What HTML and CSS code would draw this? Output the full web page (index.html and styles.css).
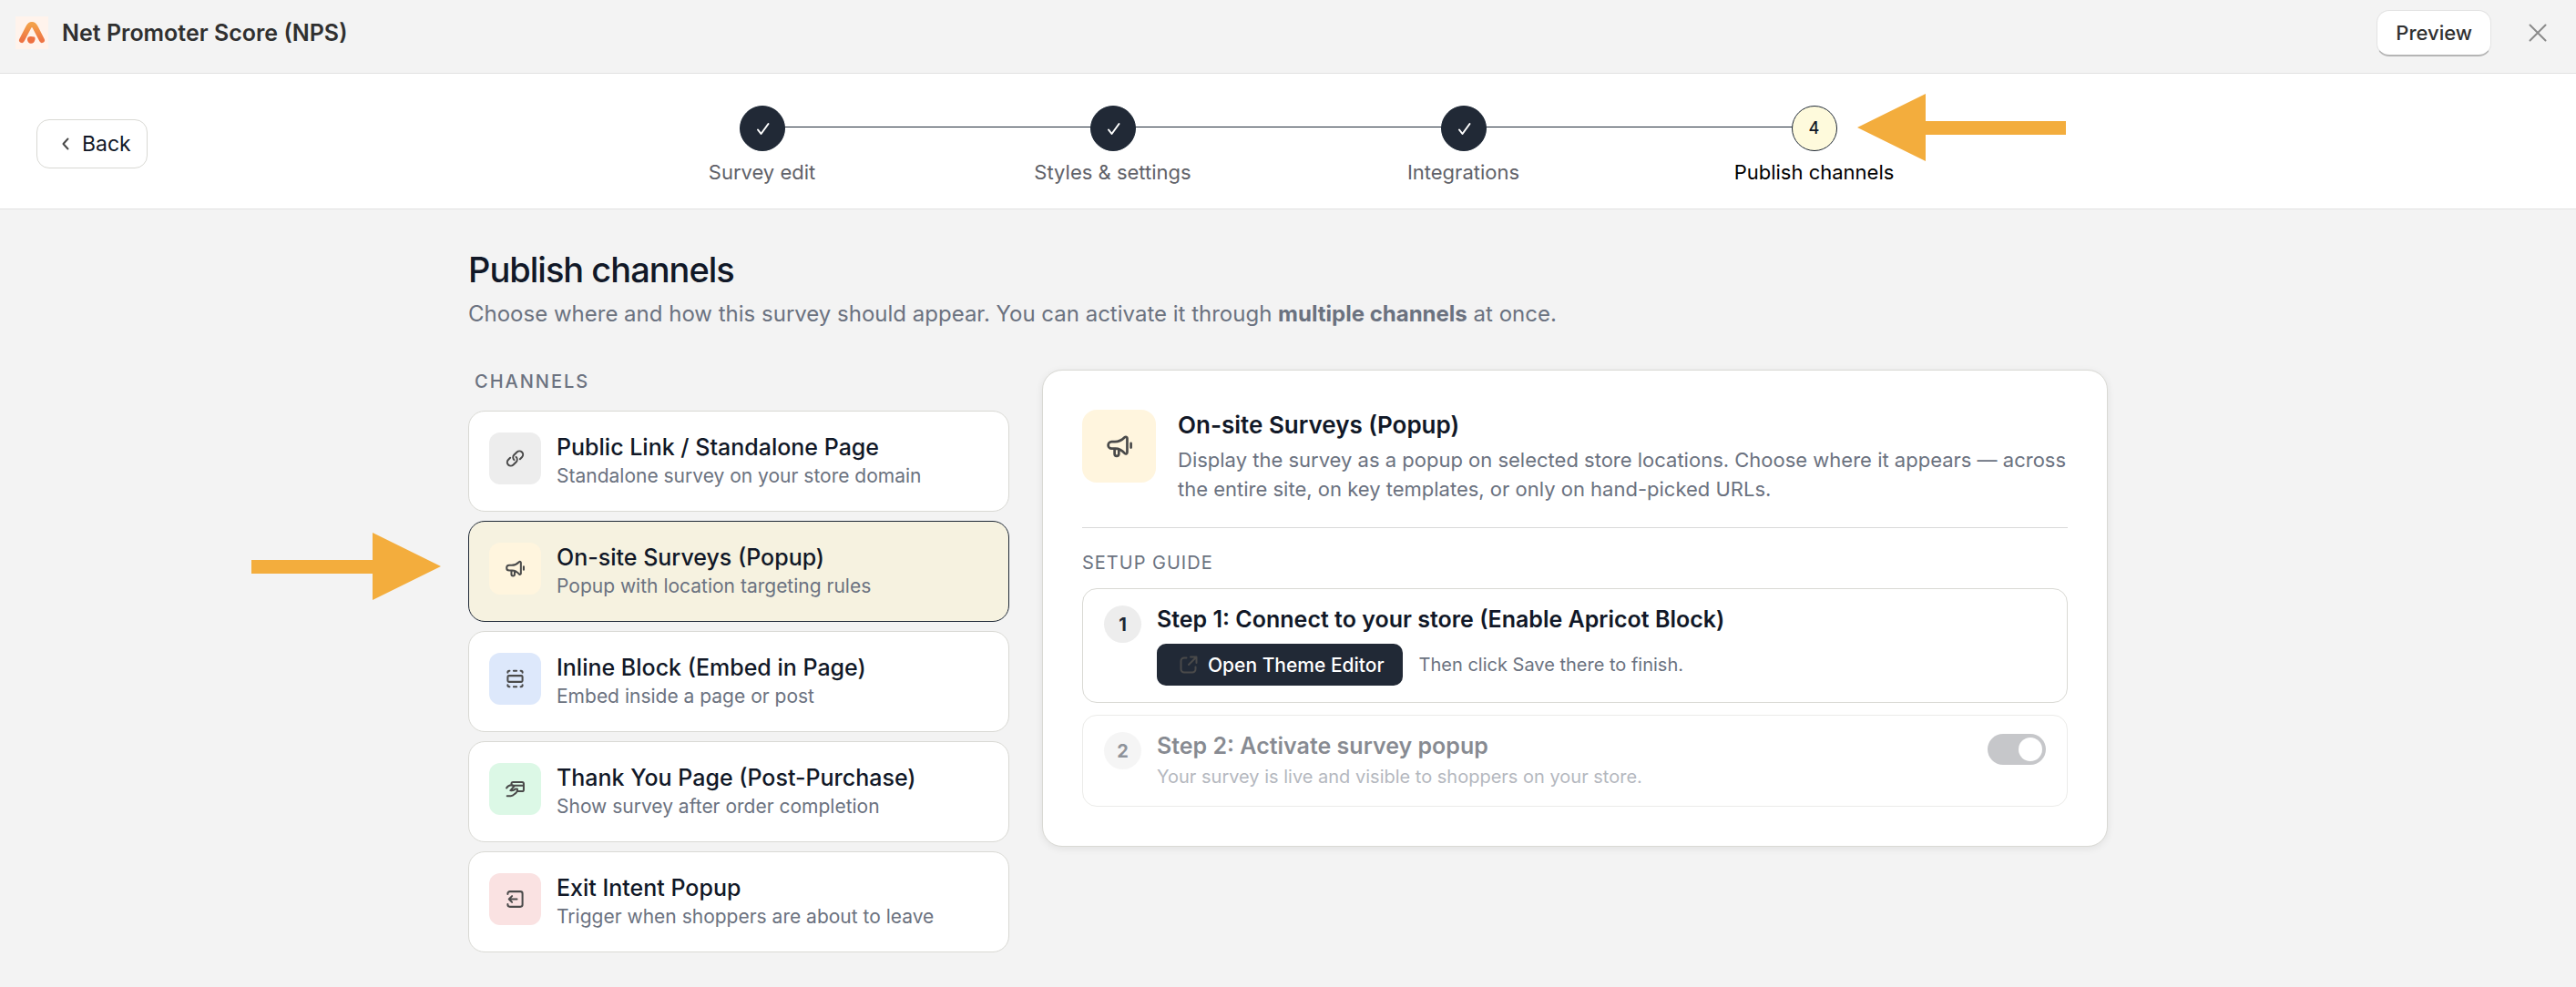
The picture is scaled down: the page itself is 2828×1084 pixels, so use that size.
FILE: index.html
```html
<!DOCTYPE html>
<html lang="en">
<head>
    <meta charset="UTF-8">
    <meta name="viewport" content="width=device-width, initial-scale=1.0">
    <title>Net Promoter Score (NPS)</title>
    <link rel="stylesheet" href="styles.css">
</head>
<body>
    <header class="topbar">
        <svg class="logo" viewBox="0 0 36 36" aria-hidden="true">
            <defs>
                <linearGradient id="logoFill" x1="0" y1="0" x2="0" y2="1">
                    <stop offset="0" stop-color="#f3a04a"/>
                    <stop offset="1" stop-color="#ee7444"/>
                </linearGradient>
            </defs>
            <rect width="36" height="36" fill="#fff3ec"/>
            <path d="M7 26 13.800 12.800C15 10.400 16 9 18 9s3 1.400 4.200 3.800L29 26" stroke="url(#logoFill)" stroke-width="6"/>
            <path d="M13 25.200c0-2.200 1.800-3.400 4-3.200l3.500.6c1 .3 1.300 1.400 1 2.800-.5 2.600-2.200 4.400-4.500 4.400s-4-2-4-4.600z" fill="#ee7040"/>
        </svg>
        <h1 class="topbar-title">Net Promoter Score (NPS)</h1>
        <button class="preview-btn" type="button">Preview</button>
        <button class="close-btn" type="button" aria-label="Close">
            <svg viewBox="0 0 20 20"><path d="M1.500 1.500l17 17M18.500 1.500l-17 17"/></svg>
        </button>
    </header>

    <nav class="wizard">
        <button class="back-btn" type="button">
            <svg viewBox="0 0 8 14"><path d="M6.500 1.500 1.500 7l5 5.500"/></svg>
            Back
        </button>
        <ol class="steps">
            <li class="step done">
                <span class="step-dot"><svg viewBox="0 0 16 16"><path d="M3 9.500l3.500 4.500L14.500 3"/></svg></span>
                <span class="step-label">Survey edit</span>
            </li>
            <li class="step done">
                <span class="step-dot"><svg viewBox="0 0 16 16"><path d="M3 9.500l3.500 4.500L14.500 3"/></svg></span>
                <span class="step-label">Styles &amp; settings</span>
            </li>
            <li class="step done">
                <span class="step-dot"><svg viewBox="0 0 16 16"><path d="M3 9.500l3.500 4.500L14.500 3"/></svg></span>
                <span class="step-label">Integrations</span>
            </li>
            <li class="step current">
                <span class="step-dot">4</span>
                <span class="step-label">Publish channels</span>
                <svg class="arrow arrow-left" viewBox="0 0 229 74" aria-hidden="true"><path d="M0 37 75 0v30h154v15H75v29z"/></svg>
            </li>
        </ol>
    </nav>

    <main class="page">
        <h2 class="page-title">Publish channels</h2>
        <p class="page-text">Choose where and how this survey should appear. You can activate it through <strong>multiple channels</strong> at once.</p>

        <div class="columns">
            <section class="channels">
                <h3 class="channels-label">CHANNELS</h3>

                <button class="channel" type="button">
                    <span class="channel-icon gray">
                        <svg class="icon" viewBox="0 0 20 20"><path d="M9.200 11.200a2.900 2.900 0 0 1 0-4.100l2.300-2.300a2.900 2.900 0 0 1 4.100 4.100l-1.600 1.600M10.800 8.800a2.900 2.900 0 0 1 0 4.100l-2.300 2.300a2.900 2.900 0 0 1-4.100-4.100L6 9.500"/></svg>
                    </span>
                    <span class="channel-text">
                        <span class="channel-name">Public Link / Standalone Page</span>
                        <span class="channel-desc">Standalone survey on your store domain</span>
                    </span>
                </button>

                <div class="channel-wrap">
                    <svg class="arrow arrow-right" viewBox="0 0 208 74" aria-hidden="true"><path d="M208 37 133 0v30H0v15h133v29z"/></svg>
                    <button class="channel selected" type="button">
                        <span class="channel-icon yellow">
                            <svg class="icon" viewBox="0 0 20 20"><path d="M5.200 7.300h2c2.500 0 4.500-1.200 6-2.700.6-.6 1.500-.2 1.500.6v8.600c0 .9-.9 1.200-1.500.6-1.500-1.700-3.200-2.900-5.600-2.900H5.200a2.100 2.100 0 0 1 0-4.200zM7 11.500v3.200a1.300 1.300 0 0 0 2.600 0v-2.900M17 8.300v2.600"/></svg>
                        </span>
                        <span class="channel-text">
                            <span class="channel-name">On-site Surveys (Popup)</span>
                            <span class="channel-desc">Popup with location targeting rules</span>
                        </span>
                    </button>
                </div>

                <button class="channel" type="button">
                    <span class="channel-icon blue">
                        <svg class="icon" viewBox="0 0 20 20"><rect x="4" y="7.500" width="12" height="5" rx="1"/><path d="M4 5v-.2c0-.7.500-1.300 1.200-1.300h.3M8.800 3.500h2.400M14.500 3.500h.3c.7 0 1.200.6 1.200 1.300V5M4 15v.2c0 .7.500 1.300 1.200 1.300h.3M8.800 16.500h2.400M14.500 16.500h.3c.7 0 1.200-.6 1.200-1.300V15"/></svg>
                    </span>
                    <span class="channel-text">
                        <span class="channel-name">Inline Block (Embed in Page)</span>
                        <span class="channel-desc">Embed inside a page or post</span>
                    </span>
                </button>

                <button class="channel" type="button">
                    <span class="channel-icon green">
                        <svg class="icon" viewBox="0 0 20 20"><path d="M7 6.500v-.7c0-.8.600-1.400 1.400-1.400h7.200c.8 0 1.400.6 1.400 1.400v4.700c0 .8-.6 1.400-1.400 1.400h-3.800M7.500 7.300H17M3 9.200c1-1.600 2.300-2.400 4-2.400h1M9.500 7.500 6.200 11.200c1.500.3 3-.1 4-1.200h1.600c.4 2-1 3.300-2.300 4.200-.9 1-1.800 1.600-3 1.600H3.500"/></svg>
                    </span>
                    <span class="channel-text">
                        <span class="channel-name">Thank You Page (Post-Purchase)</span>
                        <span class="channel-desc">Show survey after order completion</span>
                    </span>
                </button>

                <button class="channel" type="button">
                    <span class="channel-icon red">
                        <svg class="icon" viewBox="0 0 20 20"><path d="M4 6V5.500c0-1 .8-1.700 1.800-1.700h8.400c1 0 1.800.7 1.800 1.700v9c0 1-.8 1.700-1.800 1.700H5.800c-1 0-1.800-.7-1.800-1.700V14M11.500 10H5M7.500 7.500 5 10l2.500 2.500"/></svg>
                    </span>
                    <span class="channel-text">
                        <span class="channel-name">Exit Intent Popup</span>
                        <span class="channel-desc">Trigger when shoppers are about to leave</span>
                    </span>
                </button>
            </section>

            <section class="panel">
                <div class="panel-head">
                    <span class="panel-icon yellow">
                        <svg class="icon" viewBox="0 0 20 20"><path d="M5.200 7.300h2c2.500 0 4.500-1.200 6-2.700.6-.6 1.500-.2 1.500.6v8.600c0 .9-.9 1.200-1.500.6-1.500-1.700-3.200-2.900-5.600-2.900H5.200a2.100 2.100 0 0 1 0-4.200zM7 11.500v3.200a1.300 1.300 0 0 0 2.600 0v-2.900M17 8.300v2.600"/></svg>
                    </span>
                    <div>
                        <h3 class="panel-title">On-site Surveys (Popup)</h3>
                        <p class="panel-desc">Display the survey as a popup on selected store locations. Choose where it appears — across the entire site, on key templates, or only on hand-picked URLs.</p>
                    </div>
                </div>

                <h4 class="guide-label">SETUP GUIDE</h4>

                <div class="guide-step">
                    <span class="guide-num">1</span>
                    <div class="guide-body">
                        <h5 class="guide-title">Step 1: Connect to your store (Enable Apricot Block)</h5>
                        <div class="guide-action">
                            <button class="editor-btn" type="button">
                                <svg viewBox="0 0 20 20"><path d="M7.500 2.500H5A3.500 3.500 0 0 0 1.500 6v9A3.500 3.500 0 0 0 5 18.500h9a3.500 3.500 0 0 0 3.500-3.500v-2.500M12 1.500h6.500V8M18 2l-8 8"/></svg>
                                Open Theme Editor
                            </button>
                            <span class="guide-hint">Then click Save there to finish.</span>
                        </div>
                    </div>
                </div>

                <div class="guide-step disabled">
                    <span class="guide-num">2</span>
                    <div class="guide-body">
                        <label class="guide-title" for="activate">Step 2: Activate survey popup</label>
                        <p class="guide-text">Your survey is live and visible to shoppers on your store.</p>
                    </div>
                    <input class="toggle" id="activate" type="checkbox" role="switch" checked disabled>
                </div>
            </section>
        </div>
    </main>
</body>
</html>
```
FILE: styles.css
```css
* {
    box-sizing: border-box;
    margin: 0;
    padding: 0;
}

body {
    font-family: Inter, "Liberation Sans", sans-serif;
    font-size: 22px;
    line-height: 32px;
    color: #111827;
    background: #f3f3f3;
}

button {
    font-family: inherit;
    color: inherit;
    background: #fff;
    cursor: pointer;
}

svg {
    flex: none;
    fill: none;
    stroke-linecap: round;
    stroke-linejoin: round;
}

/* Top bar */
.topbar {
    display: flex;
    align-items: center;
    padding: 10px 32px 18px 17px;
    height: 81px;
    border-bottom: 1px solid #e1e1e1;
}

.logo {
    width: 36px;
    height: 36px;
    margin-right: 15px;
}

.topbar-title {
    font-size: 25px;
    font-weight: 600;
    color: #303030;
    margin-right: auto;
}

.preview-btn {
    height: 51px;
    padding: 0 20px;
    font-size: 22px;
    font-weight: 500;
    color: #303030;
    border: 1px solid #e3e3e3;
    border-bottom: 2px solid #b5b5b5;
    border-radius: 14px;
}

.close-btn {
    display: flex;
    margin-left: 41px;
    border: none;
    background: none;
}

.close-btn svg {
    width: 20px;
    height: 20px;
    stroke: #8a8a8a;
    stroke-width: 2;
}

/* Wizard steps */
.wizard {
    display: grid;
    grid-template-columns: minmax(160px, 1fr) minmax(0, 1540px) minmax(160px, 1fr);
    align-items: start;
    padding: 35px 0 26px;
    background: #fff;
    border-bottom: 1px solid #e1e1e1;
}

.back-btn {
    display: flex;
    align-items: center;
    justify-self: start;
    gap: 14px;
    height: 54px;
    margin: 15px 0 0 40px;
    padding: 0 17px 0 27px;
    font-size: 23px;
    font-weight: 400;
    border: 1px solid #d9d9d4;
    border-radius: 14px;
}

.back-btn svg {
    width: 8px;
    height: 14px;
    stroke: #4a4a4a;
    stroke-width: 2;
}

.steps {
    display: flex;
    list-style: none;
}

.step {
    position: relative;
    flex: 1;
    display: flex;
    flex-direction: column;
    align-items: center;
    gap: 9px;
}

/* line to the next step */
.step.done::after {
    content: "";
    position: absolute;
    top: 23px;
    left: 50%;
    width: 100%;
    height: 1px;
    background: #1f2937;
}

.step-dot {
    position: relative;
    z-index: 1;
    display: flex;
    align-items: center;
    justify-content: center;
    width: 50px;
    height: 50px;
    font-size: 18px;
    font-weight: 500;
    border: 1px solid #1f2937;
    border-radius: 50%;
    background: #212936;
}

.step-dot svg {
    width: 16px;
    height: 16px;
    stroke: #fff;
    stroke-width: 2;
}

.step-label {
    font-size: 22px;
    line-height: 28px;
    color: #5f6168;
}

.current .step-dot {
    background: #fefadc;
}

.current .step-label {
    color: #000;
}

.arrow {
    position: absolute;
    fill: #f3ad3d;
}

.arrow-left {
    width: 229px;
    top: -13px;
    left: calc(50% + 47px);
}

.arrow-right {
    width: 208px;
    top: 13px;
    right: calc(100% + 30px);
}

/* Page */
.page {
    max-width: 1800px;
    margin: 0 auto;
    padding: 43px 0 38px;
}

.page-title {
    font-size: 38px;
    line-height: 46px;
    font-weight: 500;
    letter-spacing: -1px;
}

.page-text {
    margin-top: 8px;
    font-size: 24px;
    line-height: 36px;
    color: #6b7280;
}

.columns {
    display: grid;
    grid-template-columns: minmax(0, 594px) minmax(0, 1fr);
    align-items: start;
    gap: 36px;
    margin-top: 43px;
}

.channels {
    display: flex;
    flex-direction: column;
    gap: 10px;
}

.channels-label {
    padding: 0 7px;
    line-height: 26px;
    margin-bottom: 9px;
    font-size: 20px;
    font-weight: 500;
    letter-spacing: 2px;
    color: #6b7280;
}

.channel-wrap {
    position: relative;
}

.channel {
    display: flex;
    gap: 17px;
    width: 100%;
    padding: 23px 22px 22px;
    text-align: left;
    border: 1px solid #d9d9d4;
    border-radius: 18px;
}

.channel.selected {
    background: #f6f2e0;
    border-color: #1f2937;
}

.channel-icon,
.panel-icon {
    flex: none;
    display: flex;
    align-items: center;
    justify-content: center;
    width: 57px;
    height: 57px;
    border-radius: 12px;
}

.panel-icon {
    width: 81px;
    height: 80px;
    border-radius: 16px;
}

.icon {
    width: 27px;
    height: 27px;
    stroke: #4a4a4a;
    stroke-width: 1.5;
}

.panel-icon .icon {
    width: 36px;
    height: 36px;
}

.gray { background: #ededed; }
.yellow { background: #fff5de; }
.blue { background: #dde8fb; }
.green { background: #dcf8e6; }
.red { background: #fae2e2; }

.channel-text {
    display: flex;
    flex-direction: column;
}

.channel-name {
    font-size: 25px;
    line-height: 32px;
    font-weight: 500;
}

.channel-desc {
    font-size: 21px;
    line-height: 32px;
    color: #6b7280;
}

/* Detail panel */
.panel {
    padding: 43px;
    background: #fff;
    border: 1px solid #d9d9d4;
    border-radius: 22px;
    box-shadow: 0 2px 8px rgba(0, 0, 0, 0.08);
}

.panel-head {
    display: flex;
    gap: 24px;
    padding-bottom: 26px;
    border-bottom: 1px solid #d9d9d9;
}

.panel-title {
    font-size: 26px;
    line-height: 34px;
    font-weight: 600;
}

.panel-desc {
    margin-top: 5px;
    font-size: 22px;
    line-height: 32px;
    color: #6b7280;
}

.guide-label {
    margin: 24px 0 14px;
    font-size: 20px;
    line-height: 28px;
    font-weight: 400;
    letter-spacing: 1px;
    color: #6b7280;
}

.guide-step {
    display: flex;
    gap: 17px;
    padding: 18px 23px;
    border: 1px solid #d9d9d4;
    border-radius: 16px;
}

.guide-step.disabled {
    margin-top: 13px;
    opacity: 0.5;
}

.guide-num {
    flex: none;
    display: flex;
    align-items: center;
    justify-content: center;
    width: 41px;
    height: 41px;
    font-size: 20px;
    font-weight: 700;
    color: #1f2937;
    background: #ededed;
    border-radius: 50%;
}

.guide-body {
    flex: 1;
}

.guide-title {
    display: block;
    font-size: 25px;
    line-height: 30px;
    font-weight: 600;
}

.guide-action {
    display: flex;
    align-items: center;
    gap: 18px;
    margin-top: 12px;
}

.editor-btn {
    display: flex;
    align-items: center;
    gap: 11px;
    height: 46px;
    padding: 0 20px 0 25px;
    font-size: 21px;
    font-weight: 500;
    color: #fff;
    background: #212936;
    border: none;
    border-radius: 10px;
}

.editor-btn svg {
    width: 20px;
    height: 20px;
    stroke: #4a4a4a;
    stroke-width: 2;
}

.guide-hint {
    font-size: 20px;
    color: #6b7280;
}

.guide-text {
    margin-top: 5px;
    font-size: 20px;
    line-height: 28px;
    color: #6b7280;
}

.toggle {
    appearance: none;
    display: flex;
    justify-content: flex-end;
    width: 64px;
    height: 34px;
    padding: 4px;
    margin-top: 2px;
    background: #8f9197;
    border-radius: 17px;
}

.toggle::before {
    content: "";
    width: 26px;
    height: 26px;
    background: #fff;
    border-radius: 50%;
}
```
